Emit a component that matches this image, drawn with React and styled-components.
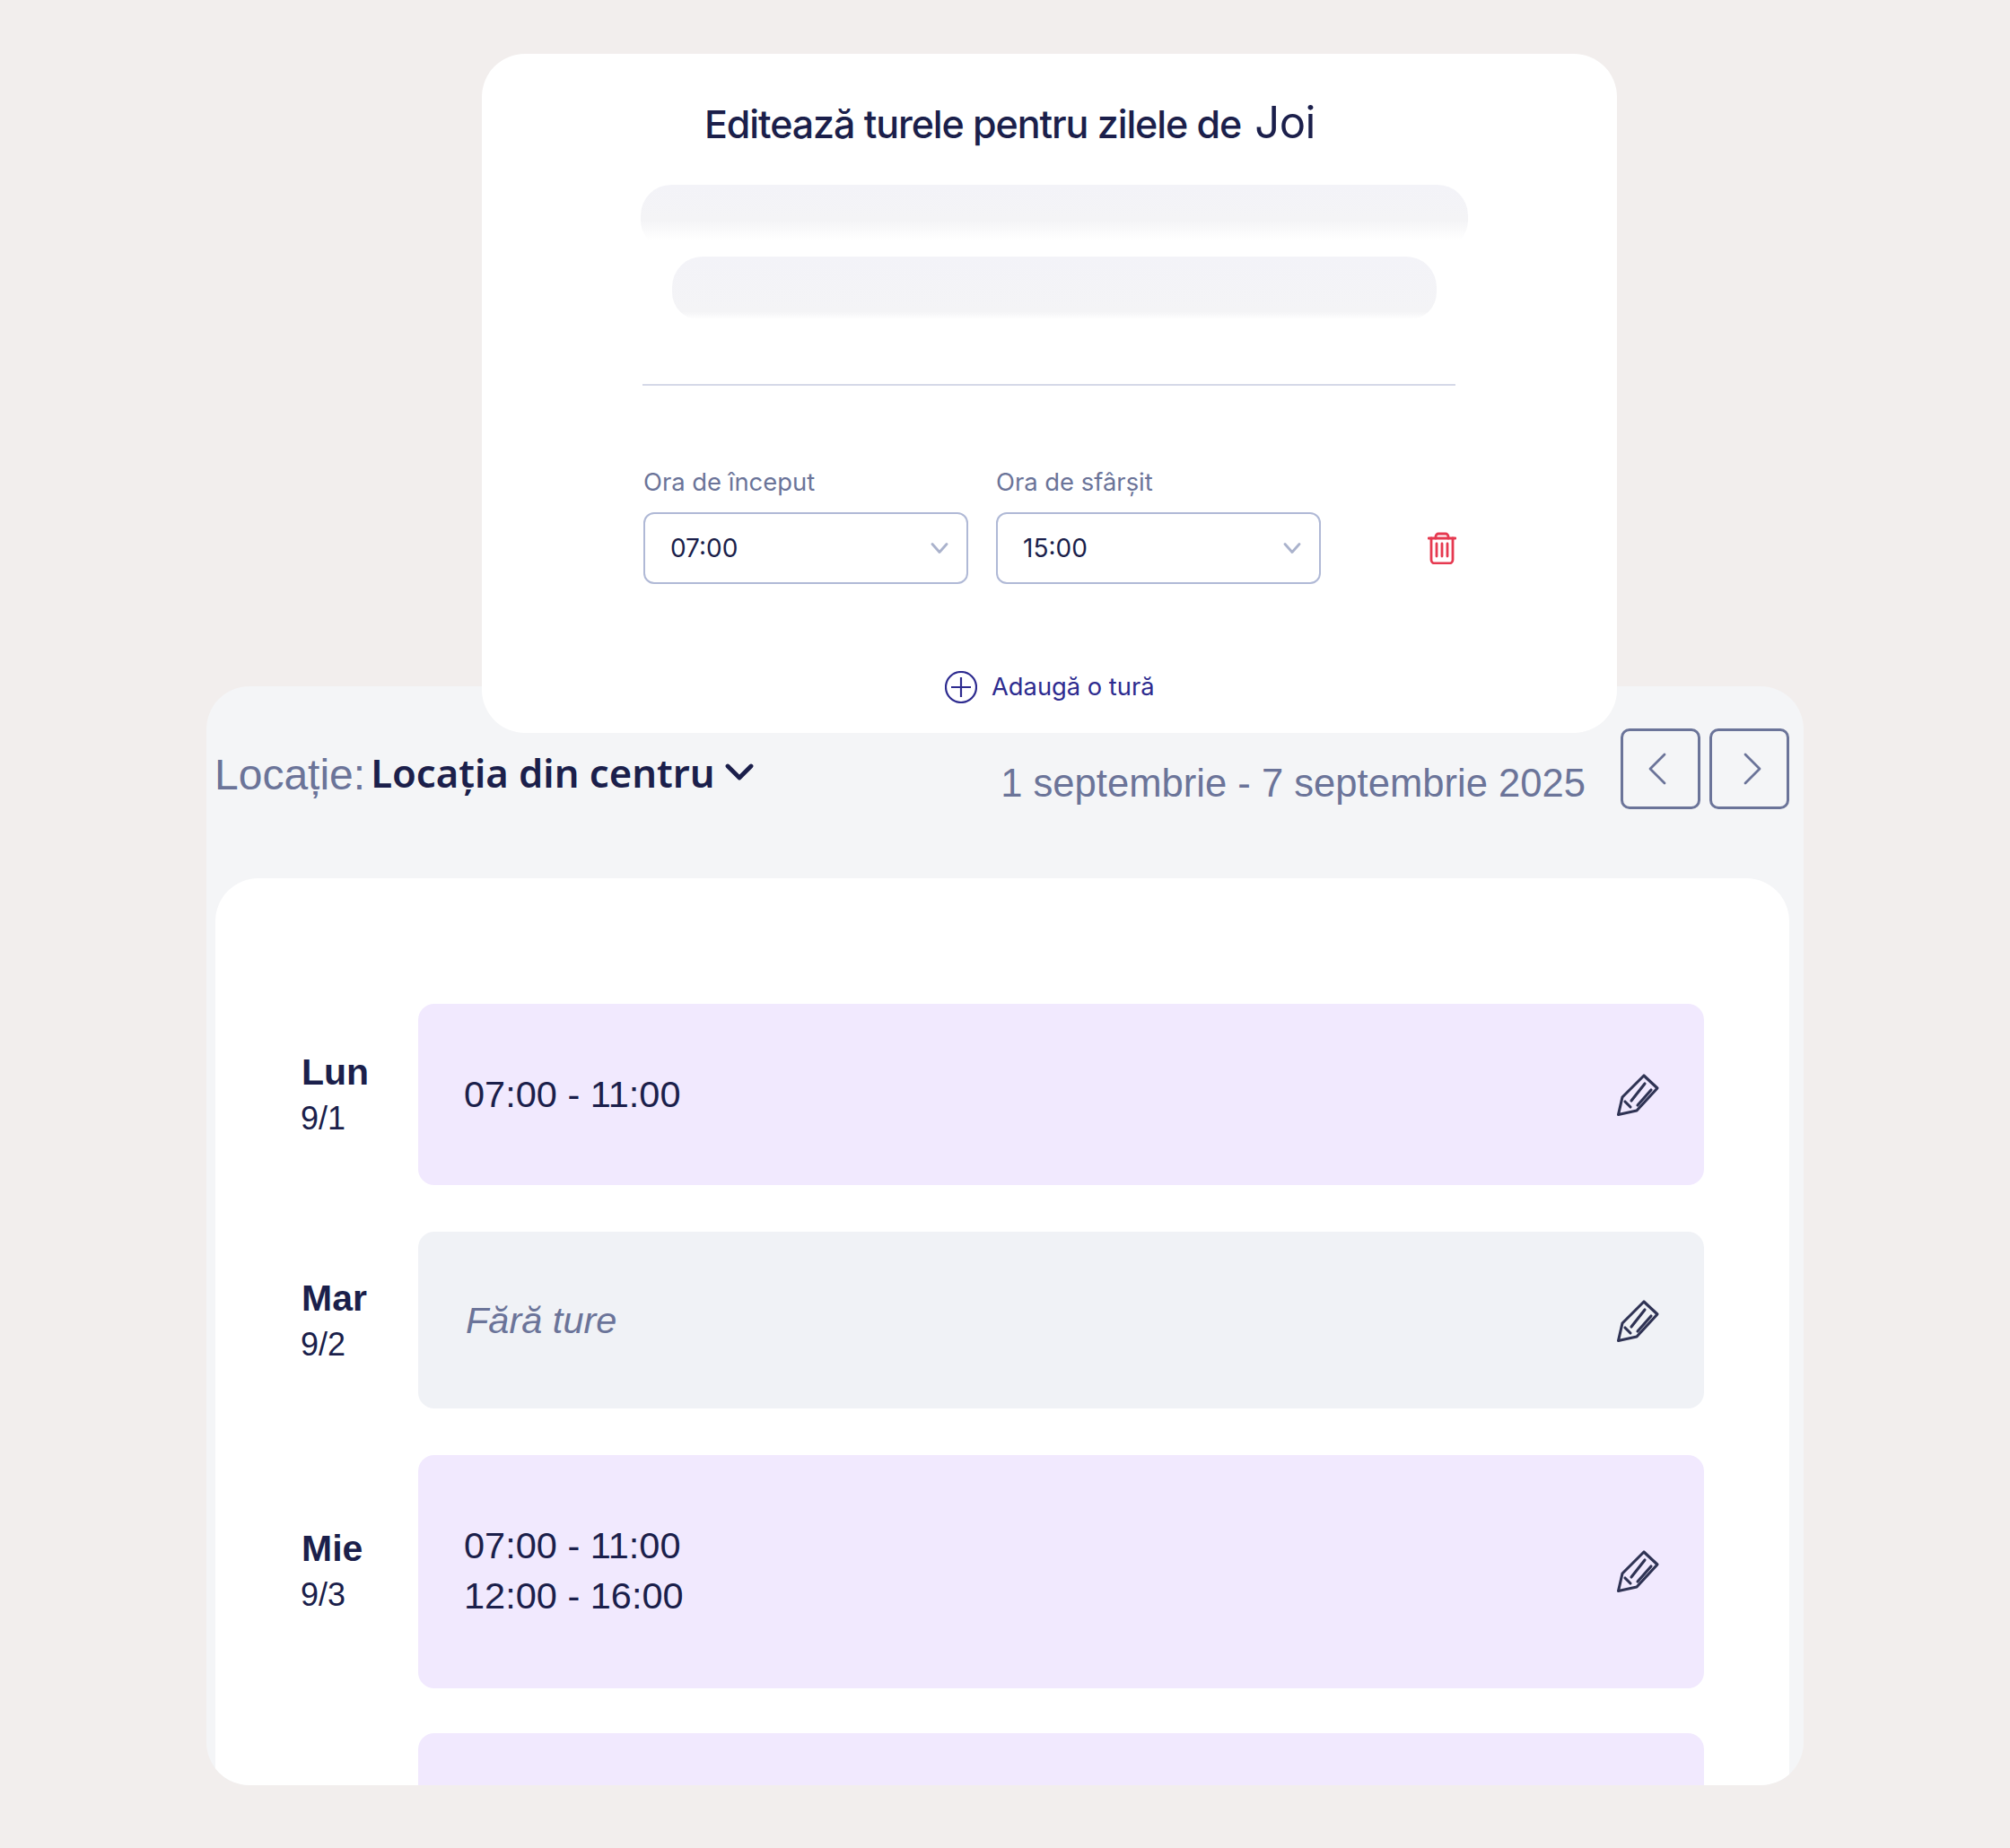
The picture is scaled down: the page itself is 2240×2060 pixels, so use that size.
import React from 'react'
import styled, { createGlobalStyle } from 'styled-components'

const GlobalStyle = createGlobalStyle`
  html, body {
    margin: 0;
    padding: 0;
    background: #f2eeed;
  }
`

const Page = styled.div`
  width: 2240px;
  height: 2060px;
  padding-top: 60px;
  box-sizing: border-box;
  overflow: hidden;
  background: #f2eeed;
  color: #1b1f4b;
  font-family: "Liberation Sans", Arial, sans-serif;
`

// modal sits over the top of the schedule panel
const Modal = styled.section`
  position: relative;
  z-index: 1;
  width: 1265px;
  height: 757px;
  margin-left: 537px;
  box-sizing: border-box;
  padding-top: 49px;
  background: #fff;
  border-radius: 48px;
  font-family: Inter, sans-serif;
`

const TitleRow = styled.div`
  display: flex;
  align-items: baseline;
  margin-left: 248px;
  height: 56px;
  line-height: 56px;
`

const Title = styled.h2`
  margin: 0;
  font-size: 43px;
  font-weight: 500;
  letter-spacing: -1.1px;
`

const DayName = styled.span`
  margin-left: 15px;
  font-size: 49px;
  font-weight: 400;
  letter-spacing: -0.5px;
`

const Pill = styled.div`
  width: ${p => p.$width}px;
  height: ${p => p.$height}px;
  margin: ${p => p.$top}px 0 0 ${p => p.$left}px;
  border-radius: 34px 34px 30px 30px;
  background: linear-gradient(#f3f3f8 0%, #f4f4f6 ${p => p.$fade}%, #ffffff ${p => p.$end}%);
`

const Divider = styled.hr`
  width: 906px;
  height: 2px;
  margin: 72px 0 0 179px;
  border: 0;
  background: #d5d9e8;
`

const ShiftForm = styled.div`
  display: flex;
  align-items: flex-end;
  gap: 31px;
  margin: 91px 0 0 180px;
`

const Field = styled.label`
  display: flex;
  flex-direction: column;
  gap: 18px;
  width: 362px;
`

const FieldLabel = styled.span`
  font-size: 27.4px;
  line-height: 32px;
  color: #6b7499;
`

const Select = styled.div`
  display: flex;
  align-items: center;
  justify-content: space-between;
  height: 80px;
  box-sizing: border-box;
  padding: 0 20px 0 28px;
  border: 2px solid #b0b9d6;
  border-radius: 12px;
  font-size: 28px;
  color: #1b1f4b;
`

const DeleteButton = styled.button`
  display: flex;
  margin: 0 0 22px 88px;
  padding: 0;
  border: 0;
  background: none;
`

const AddShift = styled.button`
  display: flex;
  align-items: center;
  gap: 16px;
  margin: 97px 0 0 516px;
  padding: 0;
  border: 0;
  background: none;
  font-family: Inter, sans-serif;
  font-size: 27.3px;
  line-height: 36px;
  color: #2d2b8f;
`

const SchedulePanel = styled.section`
  display: flex;
  flex-direction: column;
  width: 1780px;
  height: 1225px;
  margin: -52px 0 0 230px;
  box-sizing: border-box;
  padding-top: 47px;
  overflow: hidden;
  background: #f4f5f7;
  border-radius: 48px;
`

const Toolbar = styled.div`
  display: flex;
  align-items: flex-start;
  height: 90px;
  padding: 0 16px 0 9px;
`

const LocationLabel = styled.span`
  margin-top: 22px;
  font-size: 48px;
  line-height: 60px;
  color: #6b7499;
`

const LocationName = styled.button`
  display: flex;
  align-items: center;
  gap: 11px;
  margin: 19px 0 0 6px;
  padding: 0;
  border: 0;
  background: none;
  font-family: "Noto Sans", sans-serif;
  font-size: 43.6px;
  font-weight: 600;
  line-height: 60px;
  color: #1b1f4b;
`

const DateRange = styled.span`
  margin: 31px 39px 0 auto;
  font-size: 43.6px;
  line-height: 60px;
  color: #6b7499;
`

const NavButtons = styled.div`
  display: flex;
  gap: 10px;
`

const NavButton = styled.button`
  display: flex;
  align-items: center;
  justify-content: center;
  width: 89px;
  height: 90px;
  padding: 0 ${p => (p.$back ? 7 : 0)}px 0 ${p => (p.$back ? 0 : 7)}px;
  border: 3px solid #6b7499;
  border-radius: 10px;
  background: none;
`

const WeekCard = styled.div`
  display: flex;
  flex-direction: column;
  flex: 1;
  margin: 77px 16px 0 10px;
  padding: 140px 95px 0 96px;
  background: #fff;
  border-radius: 48px 48px 0 0;
`

const DayRow = styled.div`
  display: flex;
  align-items: center;
  margin-bottom: ${p => p.$after}px;
`

const DayLabel = styled.div`
  width: 130px;
  flex-shrink: 0;
  padding-bottom: ${p => p.$nudge}px;
  line-height: 50px;
`

const DayShort = styled.div`
  font-size: 41px;
  font-weight: 700;
`

const DayDate = styled.div`
  margin: 2px 0 -2px -1px;
  font-size: 36px;
`

const ShiftBox = styled.div`
  display: flex;
  align-items: center;
  justify-content: space-between;
  flex: 1;
  height: ${p => p.$height}px;
  flex-shrink: 0;
  box-sizing: border-box;
  padding: 0 49px ${p => p.$nudge}px 51px;
  border-radius: 18px;
  background: ${p => (p.$empty ? '#f0f2f6' : '#f1e9fe')};
`

const ShiftTimes = styled.div`
  font-size: 41.5px;
  line-height: 56px;
`

const NoShifts = styled.div`
  margin-left: 2px;
  font-size: 41.5px;
  font-style: italic;
  color: #6b7499;
`

const SelectArrow = () => (
  <svg width="20" height="12" viewBox="0 0 20 12" fill="none" stroke="#aab2cc" strokeWidth="2.8" strokeLinecap="round" strokeLinejoin="round">
    <path d="M2 1.5 10 10.5 18 1.5" />
  </svg>
)

const TrashIcon = () => (
  <svg width="32" height="36" viewBox="0 0 32 36" fill="none" stroke="#e63950" strokeWidth="2.8" strokeLinecap="round" strokeLinejoin="round">
    <path d="M1 7H31" />
    <path d="M9 7V5a3 3 0 0 1 3-3h8a3 3 0 0 1 3 3v2" />
    <path d="M4 7V31a4 4 0 0 0 4 4h16a4 4 0 0 0 4-4V7" />
    <path d="M10 13V27M16 13V27M22 13V27" />
  </svg>
)

const PlusCircle = () => (
  <svg width="36" height="36" viewBox="0 0 36 36" fill="none" stroke="#2d2b8f" strokeWidth="2.2">
    <circle cx="18" cy="18" r="17" />
    <path d="M18 7V29M7 18H29" />
  </svg>
)

const LocationChevron = () => (
  <svg width="32" height="20" viewBox="0 0 32 20" fill="none" stroke="#1b1f4b" strokeWidth="4.8" strokeLinecap="round" strokeLinejoin="round">
    <path d="M3 3 16 16 29 3" />
  </svg>
)

const NavChevron = ({ back }) => (
  <svg width="20" height="36" viewBox="0 0 20 36" fill="none" stroke="#6b7499" strokeWidth="2.8" strokeLinecap="round" strokeLinejoin="round">
    <path d={back ? 'M18 2 2 18 18 34' : 'M2 2 18 18 2 34'} />
  </svg>
)

const PencilIcon = () => (
  <svg width="50" height="50" viewBox="0 0 50 50" fill="none" stroke="#2f3354" strokeWidth="3.1" strokeLinecap="round" strokeLinejoin="round">
    <path d="M3.5 47.5 8 28 32 4 47 18 24 43Z" />
    <path d="M18 32 33 13M25 37 40 20M11 33 17 39" />
  </svg>
)

const days = [
  { short: 'Lun', date: '9/1', height: 202, after: 52, nudge: 0, shifts: ['07:00 - 11:00'] },
  { short: 'Mar', date: '9/2', height: 197, after: 52, nudge: 0, shifts: [] },
  { short: 'Mie', date: '9/3', height: 260, after: 50, nudge: 3, shifts: ['07:00 - 11:00', '12:00 - 16:00'] },
  { height: 120, after: 0, nudge: 0, shifts: ['07:00 - 11:00'], clipped: true },
]

export default function App () {
  return (
    <Page>
      <GlobalStyle />
      <Modal>
        <TitleRow>
          <Title>Editează turele pentru zilele de</Title>
          <DayName>Joi</DayName>
        </TitleRow>
        <Pill $width={922} $height={70} $top={41} $left={177} $fade={56} $end={88} />
        <Pill $width={852} $height={70} $top={10} $left={212} $fade={88} $end={100} />
        <Divider />
        <ShiftForm>
          <Field>
            <FieldLabel>Ora de început</FieldLabel>
            <Select>07:00<SelectArrow /></Select>
          </Field>
          <Field>
            <FieldLabel>Ora de sfârșit</FieldLabel>
            <Select>15:00<SelectArrow /></Select>
          </Field>
          <DeleteButton><TrashIcon /></DeleteButton>
        </ShiftForm>
        <AddShift><PlusCircle />Adaugă o tură</AddShift>
      </Modal>

      <SchedulePanel>
        <Toolbar>
          <LocationLabel>Locație:</LocationLabel>
          <LocationName>Locația din centru<LocationChevron /></LocationName>
          <DateRange>1 septembrie - 7 septembrie 2025</DateRange>
          <NavButtons>
            <NavButton $back><NavChevron back /></NavButton>
            <NavButton><NavChevron /></NavButton>
          </NavButtons>
        </Toolbar>
        <WeekCard>
          {days.map((day, i) => (
            <DayRow key={i} $after={day.after}>
              <DayLabel $nudge={day.nudge}>
                <DayShort>{day.short}</DayShort>
                <DayDate>{day.date}</DayDate>
              </DayLabel>
              <ShiftBox $height={day.height} $nudge={day.nudge} $empty={day.shifts.length === 0}>
                {!day.clipped && (
                  day.shifts.length
                    ? <ShiftTimes>{day.shifts.map(s => <div key={s}>{s}</div>)}</ShiftTimes>
                    : <NoShifts>Fără ture</NoShifts>
                )}
                {!day.clipped && <PencilIcon />}
              </ShiftBox>
            </DayRow>
          ))}
        </WeekCard>
      </SchedulePanel>
    </Page>
  )
}
